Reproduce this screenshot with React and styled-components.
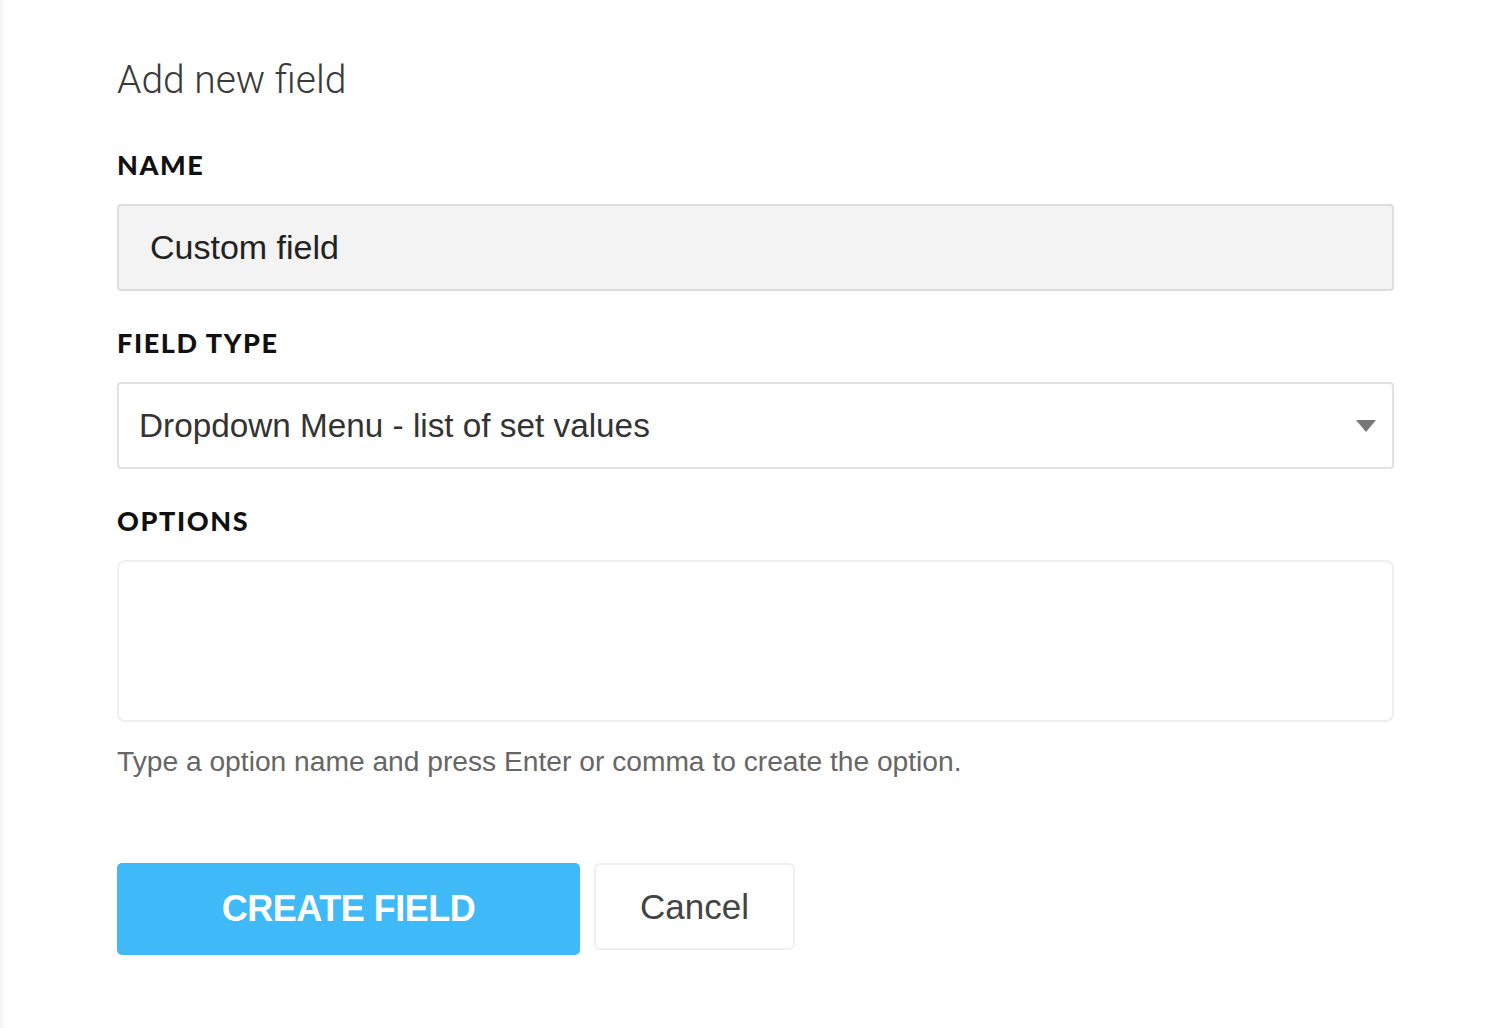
import React from "react"
import styled, { createGlobalStyle } from "styled-components"

const GlobalStyle = createGlobalStyle`
  html, body {
    margin: 0;
    padding: 0;
    background: #ffffff;
  }
  body {
    font-family: "Liberation Sans", Arial, sans-serif;
  }
`

const Page = styled.div`
  min-height: 1028px;
  box-sizing: border-box;
  border-left: 3px solid #f5f6f8;
  padding: 54px 0 0 114px;
`

const Form = styled.form`
  width: 1277px;
  display: flex;
  flex-direction: column;
`

const Title = styled.h1`
  margin: 0 0 44px;
  font-family: Roboto, "Liberation Sans", sans-serif;
  font-weight: 300;
  font-size: 39px;
  line-height: 52px;
  color: #3a3a3a;
`

const Label = styled.label`
  display: block;
  font-family: Lato, "Liberation Sans", sans-serif;
  font-weight: 900;
  font-size: 27px;
  line-height: 30px;
  letter-spacing: 1.6px;
  color: #111;
  margin-bottom: 24px;
`

const Field = styled.div`
  margin-bottom: ${(p) => p.gap ?? 37}px;
`

const TextInput = styled.div`
  box-sizing: border-box;
  height: 87px;
  display: flex;
  align-items: center;
  padding: 0 31px;
  background: #f3f3f3;
  border: 2px solid #dedede;
  border-radius: 4px;
  font-size: 34px;
  color: #222;
`

const Select = styled.div`
  box-sizing: border-box;
  height: 87px;
  display: flex;
  align-items: center;
  justify-content: space-between;
  padding: 0 16px 0 20px;
  background: #fff;
  border: 2px solid #e2e2e2;
  border-radius: 4px;
  font-size: 33.3px;
  color: #333;
`

const Arrow = styled.svg`
  width: 20px;
  height: 12px;
  fill: #777;
`

const OptionsBox = styled.div`
  box-sizing: border-box;
  height: 162px;
  border: 2px solid #efefef;
  border-radius: 8px;
  background: #fff;
`

const Help = styled.p`
  margin: 23px 0 0;
  font-size: 28.2px;
  line-height: 32px;
  color: #666;
`

const Buttons = styled.div`
  display: flex;
  align-items: flex-start;
  gap: 14px;
  margin-top: 86px;
`

const PrimaryButton = styled.button`
  width: 463px;
  height: 92px;
  border: none;
  border-radius: 5px;
  background: #40b9f9;
  color: #fff;
  font-family: "Liberation Sans", Arial, sans-serif;
  font-weight: 700;
  font-size: 36px;
  letter-spacing: -0.5px;
  cursor: pointer;
`

const SecondaryButton = styled.button`
  width: 201px;
  height: 87px;
  border: 2px solid #efefef;
  border-radius: 6px;
  background: #fff;
  color: #444;
  font-family: "Liberation Sans", Arial, sans-serif;
  font-size: 35px;
  cursor: pointer;
`

export default function App() {
  return (
    <>
      <GlobalStyle />
      <Page>
        <Form onSubmit={(e) => e.preventDefault()}>
          <Title>Add new field</Title>
          <Field>
            <Label>NAME</Label>
            <TextInput>Custom field</TextInput>
          </Field>
          <Field>
            <Label>FIELD TYPE</Label>
            <Select>
              <span>Dropdown Menu - list of set values</span>
              <Arrow viewBox="0 0 20 12">
                <polygon points="0,0 20,0 10,12" />
              </Arrow>
            </Select>
          </Field>
          <Field gap={0}>
            <Label>OPTIONS</Label>
            <OptionsBox />
            <Help>Type a option name and press Enter or comma to create the option.</Help>
          </Field>
          <Buttons>
            <PrimaryButton type="submit">CREATE FIELD</PrimaryButton>
            <SecondaryButton type="button">Cancel</SecondaryButton>
          </Buttons>
        </Form>
      </Page>
    </>
  )
}
